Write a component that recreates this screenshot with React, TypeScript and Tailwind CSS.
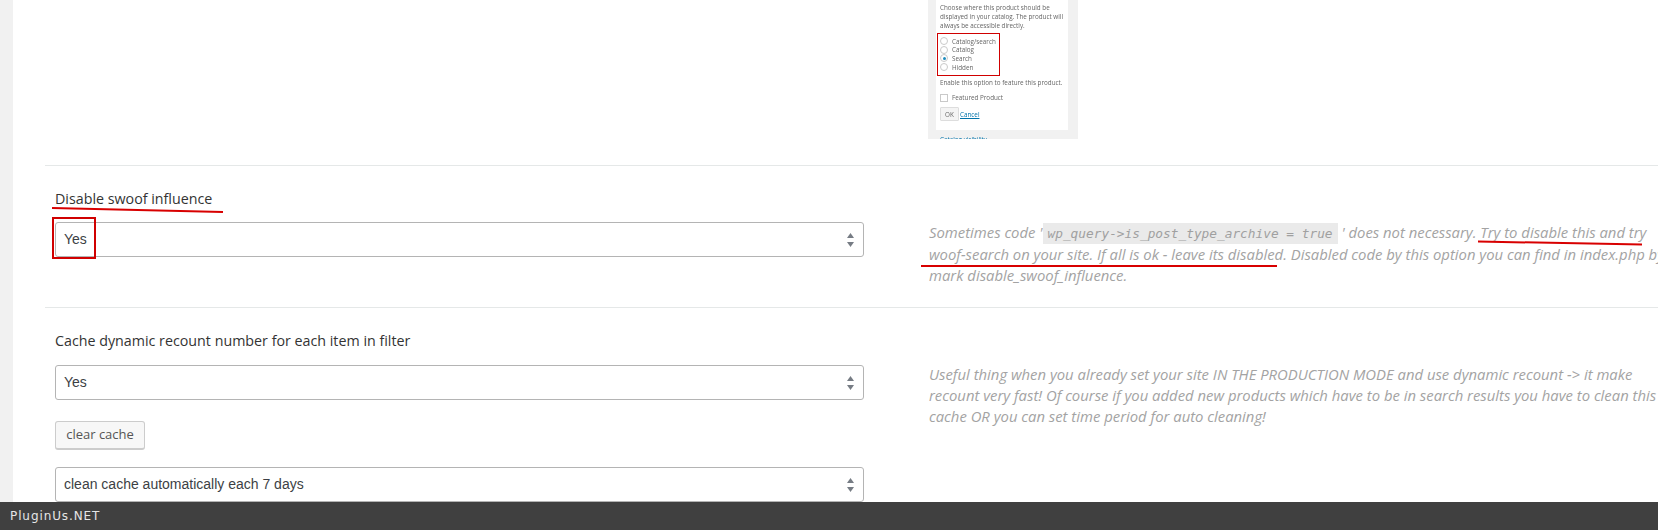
const OPEN_SANS = { fontFamily: '"Open Sans", sans-serif' };

function FakeSelect({ value }: { value: string }) {
  return (
    <div className="flex h-[35px] w-[809px] items-center justify-between rounded-[3px] border border-[#b4b4b4] bg-white pl-[8px] pr-[9px] font-['Liberation_Sans',sans-serif] text-[14px] text-[#3c3f44]">
      <span>{value}</span>
      <svg width="7" height="14" viewBox="0 0 7 14" className="fill-[#767c84]">
        <path d="M3.5 0 L7 5 L0 5 Z" />
        <path d="M0 9 L7 9 L3.5 14 Z" />
      </svg>
    </div>
  );
}

function ThumbRadio({ label, checked }: { label: string; checked?: boolean }) {
  return (
    <div className="flex h-[8.6px] items-center gap-[4px]">
      <span className="flex h-[8px] w-[8px] items-center justify-center rounded-full border border-[#c9c9c9] bg-white">
        {checked && <span className="h-[3px] w-[3px] rounded-full bg-[#1e8cbe]" />}
      </span>
      <span>{label}</span>
    </div>
  );
}

function ProductThumb() {
  return (
    <div className="ml-[-2px] h-[139px] w-[150px] overflow-hidden bg-[#f1f1f1] px-[8px]">
      <div className="relative h-[130px] w-[132px] bg-white">
        <div className="px-[4px] text-[6.3px] leading-[9px] text-[#666] blur-[0.5px]">
          <p className="whitespace-nowrap pt-[3px]">Choose where this product should be</p>
          <p className="whitespace-nowrap">displayed in your catalog. The product will</p>
          <p className="whitespace-nowrap">always be accessible directly.</p>
          <div className="mt-[7px] flex flex-col">
            <ThumbRadio label="Catalog/search" />
            <ThumbRadio label="Catalog" />
            <ThumbRadio label="Search" checked />
            <ThumbRadio label="Hidden" />
          </div>
          <p className="mt-[7px] whitespace-nowrap">Enable this option to feature this product.</p>
          <div className="mt-[6px] flex items-center gap-[4px]">
            <span className="h-[8px] w-[8px] border border-[#c9c9c9]" />
            <span>Featured Product</span>
          </div>
          <div className="mt-[5px] flex items-center gap-[1px]">
            <span className="flex h-[14px] w-[19px] items-center justify-center rounded-[1px] border border-[#ddd] bg-[#f4f4f4]">OK</span>
            <span className="text-[#0073aa] underline">Cancel</span>
          </div>
        </div>
        {/* red box from the original capture */}
        <div className="absolute left-[1px] top-[33px] h-[43px] w-[63px] border border-[#d00000]" />
      </div>
      <p className="mt-[5px] pl-[4px] text-[6.3px] leading-[9px] text-[#0073aa] blur-[0.5px]">Catalog visibility</p>
    </div>
  );
}

export default function App() {
  return (
    <div className="flex h-[530px] w-full flex-col overflow-hidden bg-white" style={OPEN_SANS}>
      <div className="flex min-h-0 flex-1">
        <div className="w-[13px] shrink-0 bg-[#f1f1f1]" />
        <div className="min-w-0 flex-1 overflow-hidden pl-[32px]">

          {/* Row with the catalog screenshot */}
          <div className="flex h-[166px] border-b border-[#e5e8e8] pl-[10px]">
            <div className="w-[809px] shrink-0" />
            <div className="ml-[66px]">
              <ProductThumb />
            </div>
          </div>

          {/* Disable swoof influence */}
          <div className="relative flex h-[142px] border-b border-[#e5e8e8] pl-[10px]">
            <div className="w-[809px] shrink-0">
              <h4 className="mt-[23px] text-[14.28px] font-medium leading-[20px] text-[#333]">Disable swoof influence</h4>
              <div className="mt-[13px]">
                <FakeSelect value="Yes" />
              </div>
            </div>
            <div className="ml-[65px] mt-[56px] whitespace-nowrap text-[14.85px] italic leading-[21px] text-[#a3a3a3]">
              Sometimes code '
              <code className="bg-[#eaeaea] px-[5px] py-[3px] font-['DejaVu_Sans_Mono',monospace] text-[12.8px] italic text-[#a0a0a0]">wp_query-&gt;is_post_type_archive = true</code>
              {" "}' does not necessary. Try to disable this and try
              <br />
              woof-search on your site. If all is ok - leave its disabled. Disabled code by this option you can find in index.php by
              <br />
              mark disable_swoof_influence.
            </div>

            {/* red annotations */}
            <div className="absolute left-[7px] top-[43px] h-[2px] w-[171px] rotate-[1.3deg] bg-[#d80000]" />
            <div className="absolute left-[7px] top-[51px] h-[42px] w-[44px] border-2 border-[#d00000]" />
            <div className="absolute left-[1433px] top-[76px] h-[2px] w-[164px] rotate-[1deg] bg-[#d80000]" />
            <div className="absolute left-[876px] top-[99px] h-[2px] w-[356px] bg-[#d80000]" />
          </div>

          {/* Cache dynamic recount */}
          <div className="flex pl-[10px]">
            <div className="w-[809px] shrink-0">
              <h4 className="mt-[23px] text-[14.28px] font-medium leading-[20px] text-[#333]">Cache dynamic recount number for each item in filter</h4>
              <div className="mt-[14px]">
                <FakeSelect value="Yes" />
              </div>
              <button className="mt-[21px] block h-[29px] w-[90px] rounded-[3px] border border-[#ccc] border-b-[2px] bg-[#f7f7f7] text-[13px] text-[#555]">
                clear cache
              </button>
              <div className="mt-[17px]">
                <FakeSelect value="clean cache automatically each 7 days" />
              </div>
            </div>
            <div className="ml-[65px] mt-[56px] whitespace-nowrap text-[14.85px] italic leading-[21px] text-[#a3a3a3]">
              Useful thing when you already set your site IN THE PRODUCTION MODE and use dynamic recount -&gt; it make
              <br />
              recount very fast! Of course if you added new products which have to be in search results you have to clean this
              <br />
              cache OR you can set time period for auto cleaning!
            </div>
          </div>
        </div>
      </div>

      <div className="flex h-[28px] shrink-0 items-center bg-[#404040] pl-[10px] font-['DejaVu_Sans',sans-serif] text-[12px] tracking-[0.9px] text-[#e6e6e6]">
        PluginUs.NET
      </div>
    </div>
  );
}
